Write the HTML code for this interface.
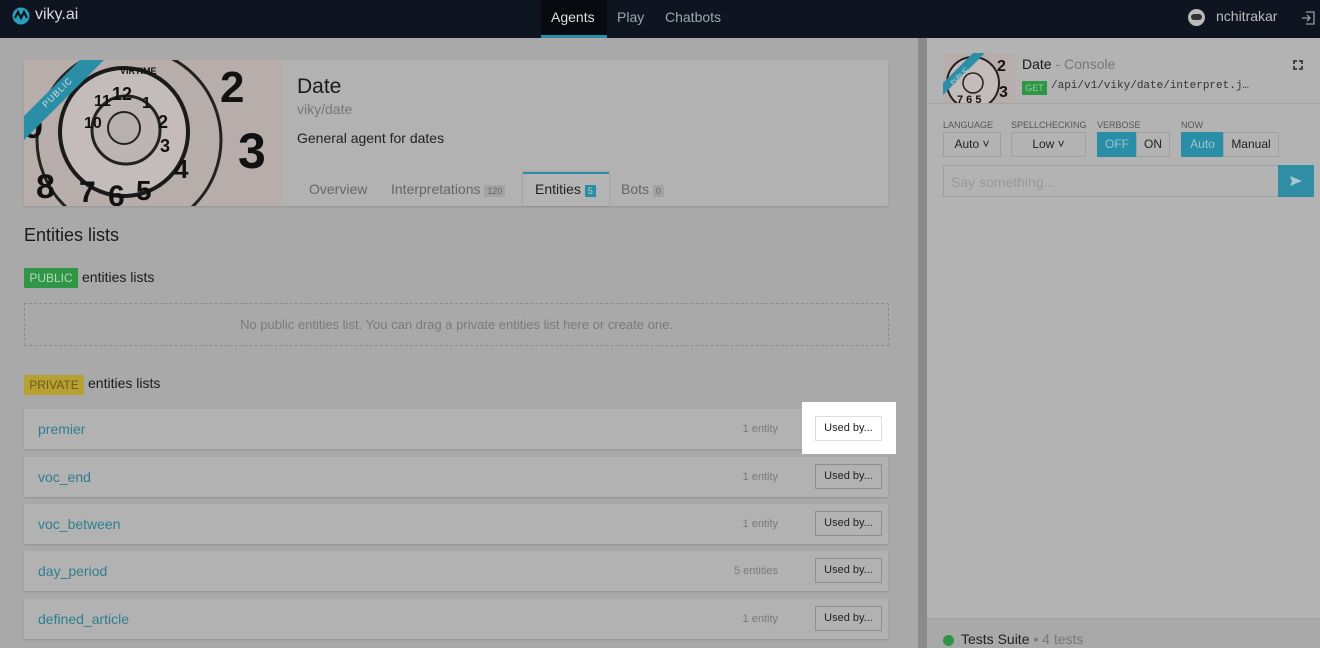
<!DOCTYPE html>
<html><head><meta charset="utf-8"><style>
*{box-sizing:border-box;margin:0;padding:0}
body{width:1320px;height:648px;overflow:hidden;background:#a9a9a9;font-family:"Liberation Sans",sans-serif;position:relative;color:#222}
.hdr{position:absolute;left:0;top:0;width:1320px;height:38px;background:#0e1520}
.abs{position:absolute}
.card{position:absolute;background:#b2b2b2;box-shadow:0 1px 2px rgba(0,0,0,.12)}
.row{position:absolute;left:24px;width:864px;height:40px;background:#b2b2b2;box-shadow:0 1px 2px rgba(0,0,0,.15)}
.row .n{position:absolute;left:14px;top:12px;font-size:14px;color:#2e7f8e}
.row .c{position:absolute;right:110px;top:14px;font-size:11px;color:#7a7a7a}
.btn{position:absolute;right:6px;top:7px;width:67px;height:25px;border:1px solid #8e8e8e;font-size:11px;line-height:23px;text-align:center;color:#222;background:#b2b2b2}
.lbl{position:absolute;top:120px;font-size:9px;color:#555}
.sb{position:absolute;top:132px;height:25px;border:1px solid #a0a0a0;font-size:12px;line-height:23px;text-align:center;background:#b3b3b3;color:#222}
</style></head><body>
<div class="hdr">
  <svg class="abs" style="left:12px;top:7px" width="18" height="18" viewBox="0 0 18 18"><circle cx="9" cy="9" r="8.5" fill="#2aa0bf"/><path d="M3 11 L6 5 L9 11 L12 5 L15 11" stroke="#0e1520" stroke-width="2.2" fill="none"/></svg>
  <div class="abs" style="left:35px;top:6px;font-size:16px;color:#d9d9d9">viky.ai</div>
  <div class="abs" style="left:541px;top:0;width:66px;height:38px;background:#070b10;border-bottom:3px solid #2a8ea7"></div>
  <div class="abs" style="left:551px;top:9px;font-size:14px;color:#ddd">Agents</div>
  <div class="abs" style="left:617px;top:9px;font-size:14px;color:#9aa">Play</div>
  <div class="abs" style="left:665px;top:9px;font-size:14px;color:#9aa">Chatbots</div>
  <div class="abs" style="left:1188px;top:9px;width:17px;height:17px;border-radius:50%;background:#bbb"></div>
  <div class="abs" style="left:1191px;top:14px;width:11px;height:6px;border-radius:3px;background:#333"></div>
  <div class="abs" style="left:1216px;top:8px;font-size:14px;color:#bbb">nchitrakar</div>
  <svg class="abs" style="left:1301px;top:11px" width="14" height="14" viewBox="0 0 14 14" fill="none" stroke="#999" stroke-width="1.3"><path d="M5 1H13V13H5M1 7H9M6 4L9 7L6 10"/></svg>
</div>

<!-- agent card -->
<div class="card" style="left:24px;top:60px;width:864px;height:146px"></div>
<svg class="abs" style="left:24px;top:60px" width="259" height="146" viewBox="0 0 259 146">
  <rect width="259" height="146" fill="#b7adab"/>
  <circle cx="105" cy="80" r="92" fill="none" stroke="#222" stroke-width="3"/>
  <circle cx="100" cy="72" r="64" fill="#c4bcba" stroke="#1a1a1a" stroke-width="4"/>
  <circle cx="102" cy="70" r="34" fill="#bdb5b3" stroke="#222" stroke-width="3"/>
  <circle cx="100" cy="68" r="16" fill="#b8b0ae" stroke="#222" stroke-width="2"/>
  <g font-family="Liberation Sans" font-weight="bold" fill="#111">
  <text x="196" y="42" font-size="44">2</text><text x="214" y="108" font-size="50">3</text>
  <text x="0" y="78" font-size="34">9</text><text x="12" y="138" font-size="34">8</text>
  <text x="55" y="142" font-size="30">7</text><text x="84" y="146" font-size="30">6</text><text x="112" y="140" font-size="28">5</text>
  <text x="150" y="118" font-size="26">4</text>
  <text x="88" y="40" font-size="18">12</text><text x="70" y="46" font-size="16">11</text><text x="118" y="48" font-size="16">1</text>
  <text x="134" y="68" font-size="18">2</text><text x="136" y="92" font-size="18">3</text><text x="60" y="68" font-size="16">10</text>
  <text x="96" y="14" font-size="9">VIRTIME</text>
  </g>
  <path d="M0 56 L56 0 L80 0 L0 80Z" fill="#2b8ea7"/>
  <text x="22" y="48" font-size="9" fill="#ddd" transform="rotate(-45 22 48)" letter-spacing="1" font-family="Liberation Sans">PUBLIC</text>
</svg>
<div class="abs" style="left:297px;top:75px;font-size:21px;color:#1a1a1a">Date</div>
<div class="abs" style="left:297px;top:101px;font-size:14px;color:#777">viky/date</div>
<div class="abs" style="left:297px;top:130px;font-size:14px;color:#222">General agent for dates</div>
<div class="abs" style="left:309px;top:181px;font-size:14px;color:#666">Overview</div>
<div class="abs" style="left:391px;top:181px;font-size:14px;color:#666">Interpretations <span style="font-size:9px;background:#a3a3a3;padding:1px 3px;color:#666">120</span></div>
<div class="abs" style="left:523px;top:172px;width:86px;height:34px;background:#b4b4b4;border-top:2px solid #2a8ea7;box-shadow:0 0 2px rgba(0,0,0,.2)"></div>
<div class="abs" style="left:535px;top:181px;font-size:14px;color:#222">Entities <span style="font-size:9px;background:#2a8ea7;padding:1px 3px;color:#ccc">5</span></div>
<div class="abs" style="left:621px;top:181px;font-size:14px;color:#666">Bots <span style="font-size:9px;background:#a3a3a3;padding:1px 3px;color:#666">0</span></div>

<div class="abs" style="left:24px;top:225px;font-size:18px;color:#1a1a1a">Entities lists</div>
<div class="abs" style="left:24px;top:268px;width:54px;height:20px;background:#2f9646;color:#b5d8bd;font-size:12px;line-height:20px;text-align:center">PUBLIC</div>
<div class="abs" style="left:82px;top:269px;font-size:14px;color:#1a1a1a">entities lists</div>
<div class="abs" style="left:24px;top:303px;width:865px;height:43px;border:1px dashed #8c8c8c;font-size:13px;color:#7a7a7a;text-align:center;line-height:41px">No public entities list. You can drag a private entities list here or create one.</div>
<div class="abs" style="left:24px;top:375px;width:60px;height:20px;background:#b8a133;color:#6b5c15;font-size:12px;line-height:20px;text-align:center">PRIVATE</div>
<div class="abs" style="left:88px;top:375px;font-size:14px;color:#1a1a1a">entities lists</div>

<div class="row" style="top:409px"><span class="n">premier</span><span class="c">1 entity</span></div>
<div class="abs" style="left:802px;top:402px;width:94px;height:52px;background:#fff"></div>
<div class="abs" style="left:815px;top:416px;width:67px;height:25px;border:1px solid #ddd;font-size:11px;line-height:23px;text-align:center;background:#fff;color:#222">Used by...</div>
<div class="row" style="top:457px"><span class="n">voc_end</span><span class="c">1 entity</span><span class="btn">Used by...</span></div>
<div class="row" style="top:504px"><span class="n">voc_between</span><span class="c">1 entity</span><span class="btn">Used by...</span></div>
<div class="row" style="top:551px"><span class="n">day_period</span><span class="c">5 entities</span><span class="btn">Used by...</span></div>
<div class="row" style="top:599px"><span class="n">defined_article</span><span class="c">1 entity</span><span class="btn">Used by...</span></div>

<div class="abs" style="left:918px;top:38px;width:9px;height:610px;background:#8a8a8a"></div>

<!-- console -->
<div class="abs" style="left:927px;top:38px;width:393px;height:580px;background:#b3b3b3"></div>
<div class="abs" style="left:927px;top:103px;width:393px;height:1px;background:#a5a5a5"></div>
<svg class="abs" style="left:943px;top:53px" width="72" height="50" viewBox="0 0 72 50">
  <rect width="72" height="50" fill="#b7adab"/>
  <circle cx="30" cy="30" r="26" fill="#c4bcba" stroke="#222" stroke-width="2"/>
  <circle cx="30" cy="30" r="10" fill="none" stroke="#222" stroke-width="1.5"/>
  <g font-family="Liberation Sans" font-weight="bold" fill="#111"><text x="54" y="18" font-size="16">2</text><text x="56" y="44" font-size="16">3</text><text x="14" y="50" font-size="11">7 6 5</text></g>
  <path d="M0 30 L30 0 L42 0 L0 42Z" fill="#2b8ea7"/>
  <text x="10" y="32" font-size="6" fill="#ddd" transform="rotate(-45 10 32)" font-family="Liberation Sans">PUBLIC</text>
</svg>
<div class="abs" style="left:1022px;top:56px;font-size:14px;color:#1a1a1a">Date <span style="color:#777">- Console</span></div>
<div class="abs" style="left:1022px;top:81px;width:25px;height:14px;background:#2f9646;color:#8fd0a0;font-size:9px;line-height:14px;text-align:center">GET</div>
<div class="abs" style="left:1051px;top:80px;font-size:11px;font-family:'Liberation Mono',monospace;color:#333">/api/v1/viky/date/interpret.j…</div>
<svg class="abs" style="left:1293px;top:60px" width="10" height="10" fill="none" stroke="#222" stroke-width="1.5"><path d="M1 4V1H4M6 1H9V4M9 6V9H6M4 9H1V6"/></svg>

<div class="lbl" style="left:943px">LANGUAGE</div>
<div class="lbl" style="left:1011px">SPELLCHECKING</div>
<div class="lbl" style="left:1097px">VERBOSE</div>
<div class="lbl" style="left:1181px">NOW</div>
<div class="sb" style="left:943px;width:58px">Auto ˅</div>
<div class="sb" style="left:1011px;width:75px">Low ˅</div>
<div class="sb" style="left:1097px;width:40px;background:#2a8ea7;border-color:#2a8ea7;color:#9cc7d2">OFF</div>
<div class="sb" style="left:1136px;width:34px">ON</div>
<div class="sb" style="left:1181px;width:43px;background:#2a8ea7;border-color:#2a8ea7;color:#9cc7d2">Auto</div>
<div class="sb" style="left:1223px;width:56px">Manual</div>
<div class="abs" style="left:943px;top:165px;width:336px;height:32px;border:1px solid #a0a0a0;background:#b3b3b3;font-size:14px;color:#999;padding:8px 7px">Say something...</div>
<div class="abs" style="left:1278px;top:165px;width:36px;height:32px;background:#2f8ea3"></div>
<svg class="abs" style="left:1290px;top:175px" width="12" height="12"><path d="M0 1L12 6L0 11L2 6Z" fill="#a8c9d1"/></svg>

<div class="abs" style="left:927px;top:618px;width:393px;height:30px;background:#a9a9a9;border-top:1px solid #a0a0a0"></div>
<div class="abs" style="left:943px;top:635px;width:11px;height:11px;border-radius:50%;background:#2f9646"></div>
<div class="abs" style="left:961px;top:631px;font-size:14px;color:#222">Tests Suite <span style="color:#777">• 4 tests</span></div>
</body></html>
